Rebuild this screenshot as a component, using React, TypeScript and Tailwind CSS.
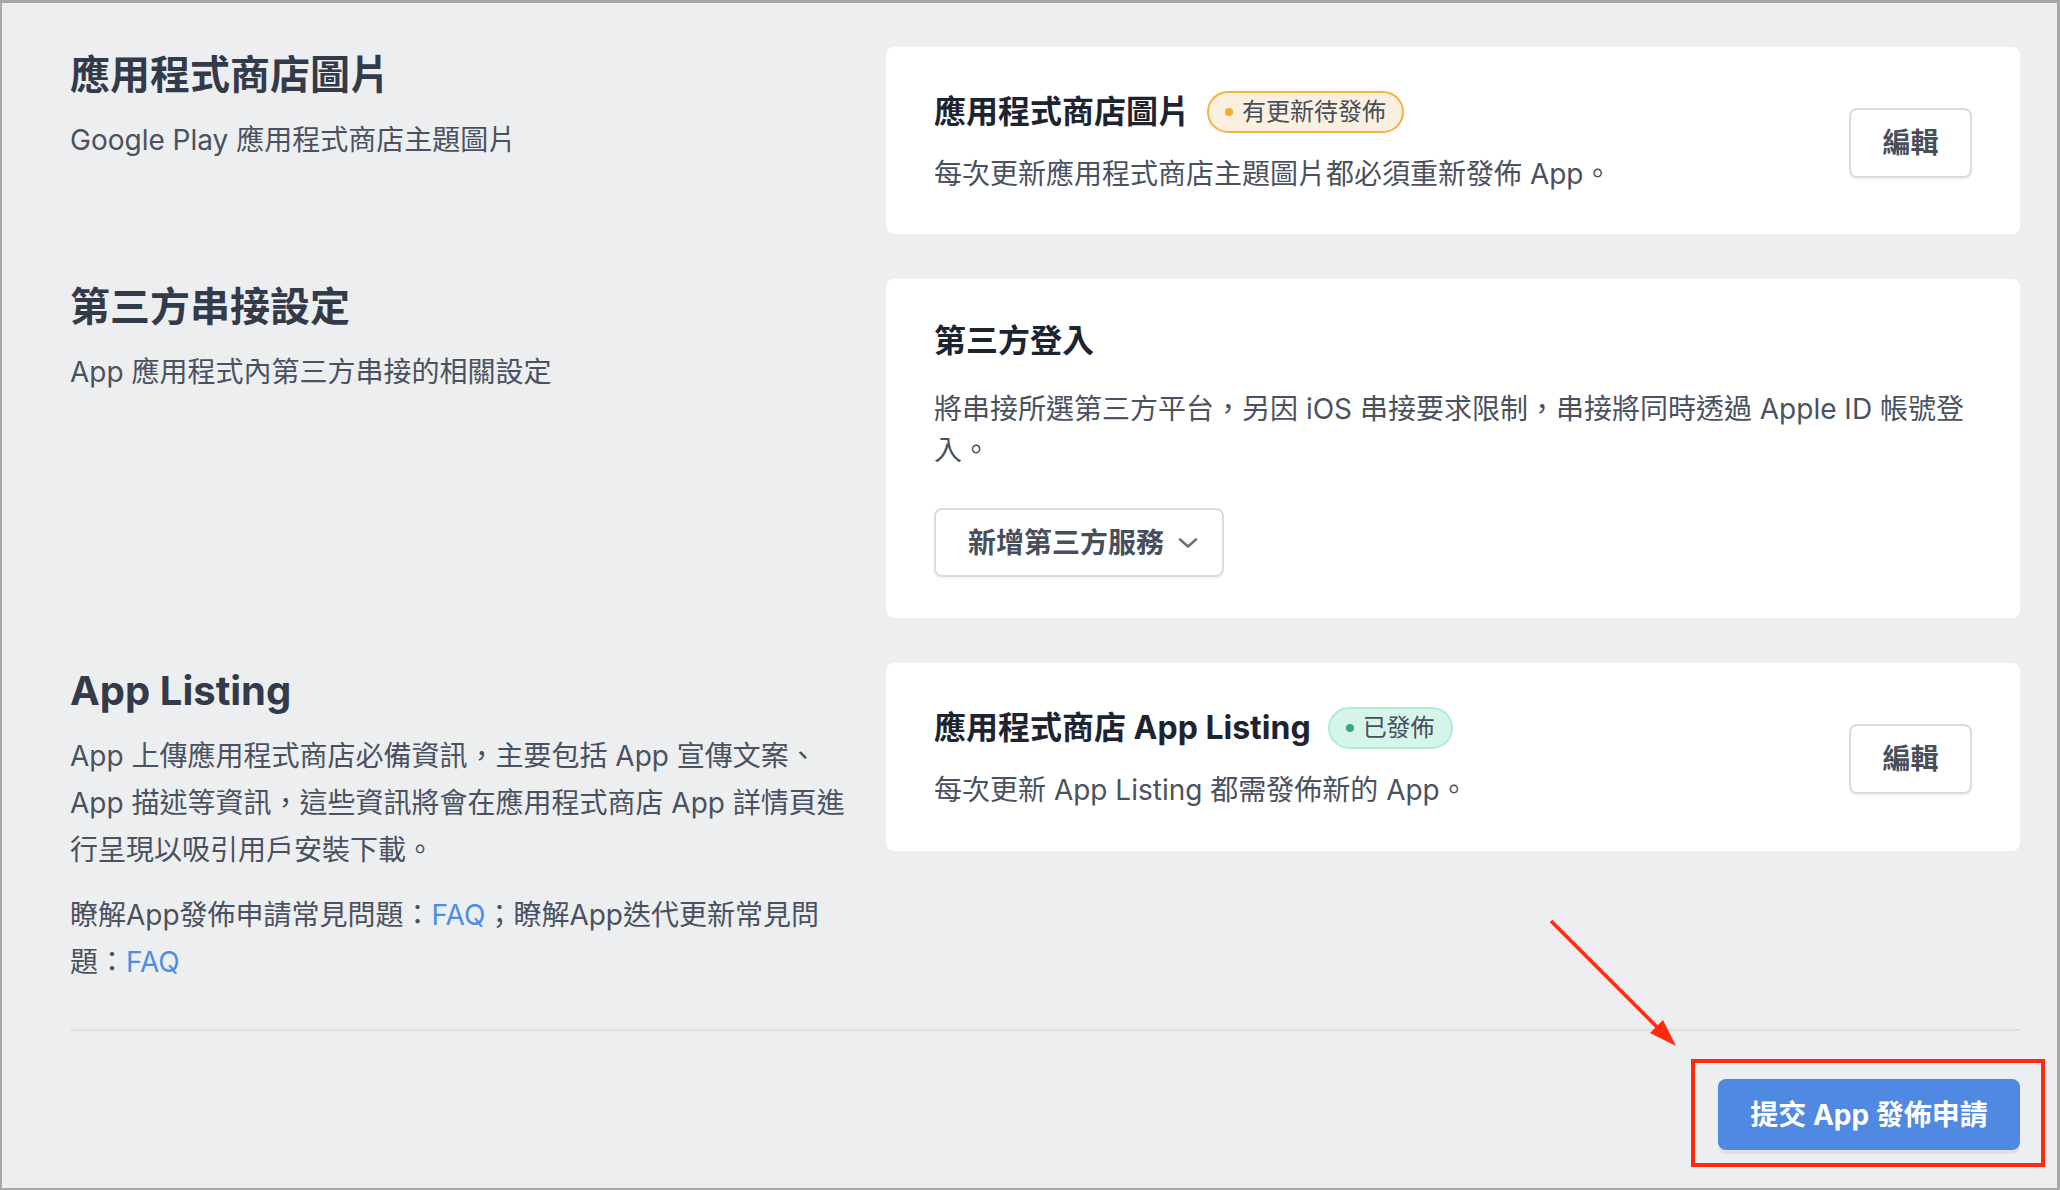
import React from 'react';

const font = { fontFamily: 'Inter, "Noto Sans CJK TC", "Noto Sans", sans-serif' };

function Badge({ tone, children }: { tone: 'pending' | 'done'; children: React.ReactNode }) {
  const box =
    tone === 'pending'
      ? 'bg-[#fbf0e0] border-[#f5b23a]'
      : 'bg-[#d6f5ea] border-[#b1ead5]';
  const dot = tone === 'pending' ? 'bg-[#f5ab2f]' : 'bg-[#3aa683]';
  return (
    <span className={`ml-[17px] inline-flex items-center h-[42px] pl-[16px] pr-[16px] gap-[9px] rounded-full border-2 ${box}`}>
      <span className={`w-[8px] h-[8px] rounded-full ${dot}`} />
      <span className="text-[24px] leading-[30px] text-[#474e5c]">{children}</span>
    </span>
  );
}

function EditButton() {
  return (
    <button className="h-[70px] w-[123px] shrink-0 rounded-[8px] border-2 border-[#d3dde7] bg-white text-[28px] font-bold text-[#474e5c] shadow-[0_2px_0_rgba(0,0,0,0.04)]">
      編輯
    </button>
  );
}

function SideText({ title, children }: { title: string; children: React.ReactNode }) {
  return (
    <div>
      <h2 className="text-[40px] leading-[56px] font-bold text-[#333a49]">{title}</h2>
      <div className="mt-[14px] whitespace-nowrap text-[28px] leading-[47px] text-[#4a5160]">{children}</div>
    </div>
  );
}

export default function App() {
  return (
    <div
      className="relative w-[2060px] h-[1190px] overflow-hidden bg-[#edeef0] border-t-[3px] border-l-2 border-r-[3px] border-b-2 border-[#a8a8a8]"
      style={font}
    >
      <div className="pl-[68px] pr-[37px] pt-[44px]">
        <div className="flex flex-col gap-[45px]">
          {/* store images */}
          <section className="grid grid-cols-[772px_1fr] gap-x-[44px]">
            <SideText title="應用程式商店圖片">Google Play 應用程式商店主題圖片</SideText>
            <div className="flex items-center justify-between rounded-[8px] bg-white pl-[48px] pr-[48px] pt-[44px] pb-[40px]">
              <div>
                <div className="flex items-center">
                  <h3 className="text-[32px] leading-[42px] font-bold text-[#1e2330]">應用程式商店圖片</h3>
                  <Badge tone="pending">有更新待發佈</Badge>
                </div>
                <p className="mt-[21px] text-[28px] leading-[40px] text-[#4a5160]">
                  每次更新應用程式商店主題圖片都必須重新發佈 App。
                </p>
              </div>
              <EditButton />
            </div>
          </section>

          {/* third party */}
          <section className="grid grid-cols-[772px_1fr] gap-x-[44px]">
            <SideText title="第三方串接設定">App 應用程式內第三方串接的相關設定</SideText>
            <div className="rounded-[8px] bg-white pl-[48px] pr-[48px] pt-[42px] pb-[41px]">
              <h3 className="text-[32px] leading-[40px] font-bold text-[#1e2330]">第三方登入</h3>
              <p className="mt-[28px] whitespace-nowrap text-[28px] leading-[41px] text-[#4a5160]">
                將串接所選第三方平台，另因 iOS 串接要求限制，串接將同時透過 Apple ID 帳號登
                <br />
                入。
              </p>
              <button className="mt-[37px] flex h-[69px] w-[290px] items-center rounded-[8px] border-2 border-[#d3dde7] bg-white pl-[32px] text-[28px] font-bold text-[#474e5c] shadow-[0_2px_0_rgba(0,0,0,0.04)]">
                新增第三方服務
                <svg className="ml-[14px]" width="20" height="12" viewBox="0 0 20 12" fill="none">
                  <path d="M2 2.5 L10 9.5 L18 2.5" stroke="#6b7280" strokeWidth="2.6" strokeLinecap="round" strokeLinejoin="round" />
                </svg>
              </button>
            </div>
          </section>

          {/* app listing */}
          <section className="grid grid-cols-[772px_1fr] gap-x-[44px] items-start">
            <div>
              <h2 className="text-[40px] leading-[56px] font-bold text-[#333a49]">App Listing</h2>
              <p className="mt-[14px] whitespace-nowrap text-[28px] leading-[47px] text-[#4a5160]">
                App 上傳應用程式商店必備資訊，主要包括 App 宣傳文案、
                <br />
                App 描述等資訊，這些資訊將會在應用程式商店 App 詳情頁進
                <br />
                行呈現以吸引用戶安裝下載。
              </p>
              <p className="mt-[18px] whitespace-nowrap text-[28px] leading-[47px] text-[#4a5160]">
                瞭解App發佈申請常見問題：<a className="text-[#4a8ee6]">FAQ</a>；瞭解App迭代更新常見問
                <br />
                題：<a className="text-[#4a8ee6]">FAQ</a>
              </p>
            </div>
            <div className="flex items-center justify-between rounded-[8px] bg-white pl-[48px] pr-[48px] pt-[44px] pb-[41px]">
              <div>
                <div className="flex items-center">
                  <h3 className="text-[32px] leading-[42px] font-bold text-[#1e2330]">應用程式商店 App Listing</h3>
                  <Badge tone="done">已發佈</Badge>
                </div>
                <p className="mt-[21px] text-[28px] leading-[40px] text-[#4a5160]">
                  每次更新 App Listing 都需發佈新的 App。
                </p>
              </div>
              <EditButton />
            </div>
          </section>
        </div>

        <div className="mt-[43px] h-[2px] bg-[#dfe0e3]" />

        <div className="mt-[48px] flex justify-end">
          <button className="h-[71px] w-[302px] rounded-[8px] bg-[#4f89e1] text-[28px] font-bold text-white shadow-[0_4px_0_rgba(0,0,0,0.06)]">
            提交 App 發佈申請
          </button>
        </div>
      </div>

      {/* annotation */}
      <svg className="pointer-events-none absolute left-[-2px] top-[-3px]" width="2060" height="1190" viewBox="0 0 2060 1190">
        <line x1="1551" y1="921" x2="1660" y2="1030" stroke="#ff2a0c" strokeWidth="3.5" />
        <polygon points="1676,1046 1650,1033 1663,1020" fill="#ff2a0c" />
        <rect x="1693" y="1061" width="350" height="104" fill="none" stroke="#ff2a0c" strokeWidth="4" />
      </svg>
    </div>
  );
}
